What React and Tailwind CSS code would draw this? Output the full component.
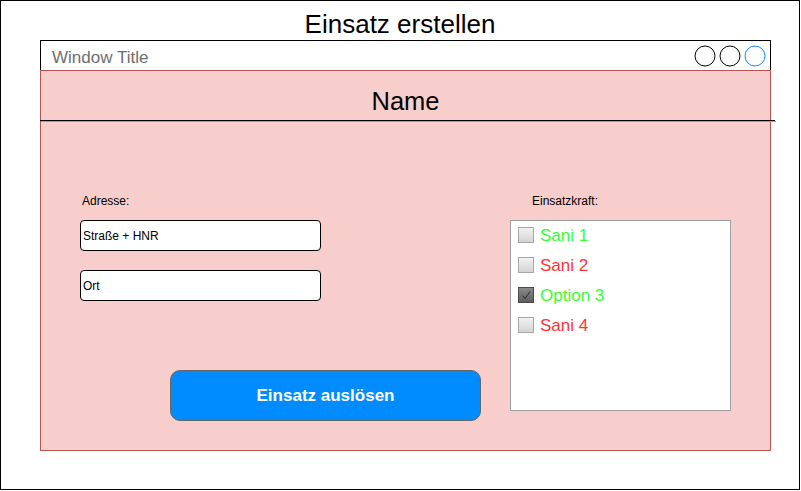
import React from "react";

function Box({ checked }) {
  if (checked) {
    return (
      <div className="w-4 h-4 shrink-0 border border-[#4a4a4a] bg-gradient-to-b from-[#8a8a8a] to-[#5e5e5e] flex items-center justify-center">
        <svg width="12" height="12" viewBox="0 0 12 12">
          <path d="M2.5 6.5 L5 9.5 L10 2.5" fill="none" stroke="#2b2b2b" strokeWidth="1" />
        </svg>
      </div>
    );
  }
  return (
    <div className="w-4 h-4 shrink-0 border border-[#a8a8a8] bg-gradient-to-b from-[#f2f2f2] to-[#d4d4d4]" />
  );
}

const items = [
  { label: "Sani 1", color: "text-[#33ff33]", checked: false },
  { label: "Sani 2", color: "text-[#ff3333]", checked: false },
  { label: "Option 3", color: "text-[#33ff33]", checked: true },
  { label: "Sani 4", color: "text-[#ff3333]", checked: false },
];

export default function App() {
  return (
    <div className="w-[801px] h-[491px] bg-white" style={{ fontFamily: '"Liberation Sans", Arial, sans-serif' }}>
      <div className="w-[800px] h-[490px] border border-black flex flex-col">
        <div className="h-[39px] pt-[8px] text-center text-[26px] leading-[30px] text-black">Einsatz erstellen</div>
        <div className="ml-[39px] w-[731px] flex flex-col">
          <div className="h-[30px] border-t border-x border-black bg-white flex items-start justify-between">
            <div className="pt-[7px] pl-[11px] text-[17px] leading-[20px] text-[#6e6e6e]">Window Title</div>
            <svg width="73" height="23" viewBox="0 0 73 23" className="mt-[4px] mr-[3px]">
              <circle cx="11" cy="11" r="10" fill="none" stroke="#000" strokeWidth="1" />
              <circle cx="36" cy="11" r="10" fill="none" stroke="#000" strokeWidth="1" />
              <circle cx="61" cy="11" r="10" fill="none" stroke="#1a8cff" strokeWidth="1" />
            </svg>
          </div>
          <div className="h-[381px] border border-[#b85450] bg-[#f8cecc] flex flex-col">
            <div className="h-[49px] pt-[15px] text-center text-[25.5px] leading-[30px] text-black">Name</div>
            <div className="-ml-px w-[735px] h-px bg-black shadow-[1px_1px_0_#a0a0a0]" />
            <div className="flex pt-[73px]">
              <div className="w-[469px] flex flex-col">
                <div className="pl-[39px] w-[280px]">
                  <div className="pl-[2px] text-[12px] leading-[14px] text-black">Adresse:</div>
                  <div className="mt-[12px] h-[31px] rounded-[4px] border border-black bg-white flex items-center pl-[2px] text-[12px] text-black">Straße + HNR</div>
                  <div className="mt-[19px] h-[31px] rounded-[4px] border border-black bg-white flex items-center pl-[2px] text-[12px] text-black">Ort</div>
                </div>
                <div className="ml-[129px] mt-[69px] w-[311px] h-[51px] rounded-[10px] border border-[#666666] bg-[#008cff] flex items-center justify-center text-white font-bold text-[17px]">
                  Einsatz auslösen
                </div>
              </div>
              <div className="flex flex-col">
                <div className="pl-[22px] text-[12px] leading-[14px] text-black">Einsatzkraft:</div>
                <div className="mt-[12px] w-[221px] h-[191px] border border-[#a0a0a0] bg-white pt-[6px] pl-[7px] flex flex-col">
                  {items.map((it) => (
                    <div key={it.label} className="h-[30px] flex items-start gap-[6px]">
                      <Box checked={it.checked} />
                      <span className={`text-[17px] leading-[18px] ${it.color}`}>{it.label}</span>
                    </div>
                  ))}
                </div>
              </div>
            </div>
          </div>
        </div>
      </div>
    </div>
  );
}
